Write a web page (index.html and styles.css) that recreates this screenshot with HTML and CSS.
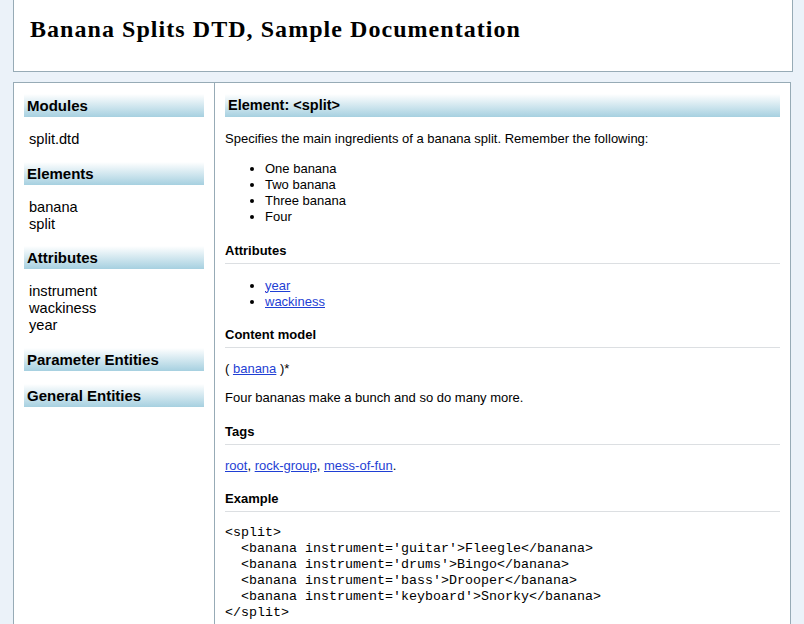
FILE: index.html
```html
<!DOCTYPE html>
<html lang="en">
<head>
<meta charset="utf-8">
<title>Banana Splits DTD, Sample Documentation</title>
<link rel="stylesheet" href="styles.css">
</head>
<body>
<div class="header">
  <h1 class="title">Banana Splits DTD, Sample Documentation</h1>
</div>
<div class="main">
  <div class="sidebar">
    <h2 class="side-h">Modules</h2>
    <ul class="side-list">
      <li>split.dtd</li>
    </ul>
    <h2 class="side-h">Elements</h2>
    <ul class="side-list">
      <li>banana</li>
      <li>split</li>
    </ul>
    <h2 class="side-h">Attributes</h2>
    <ul class="side-list">
      <li>instrument</li>
      <li>wackiness</li>
      <li>year</li>
    </ul>
    <h2 class="side-h side-h-empty">Parameter Entities</h2>
    <h2 class="side-h side-h-empty">General Entities</h2>
  </div>
  <div class="content">
    <h2 class="content-h">Element: &lt;split&gt;</h2>
    <p class="para">Specifies the main ingredients of a banana split. Remember the following:</p>
    <ul class="bullets">
      <li>One banana</li>
      <li>Two banana</li>
      <li>Three banana</li>
      <li>Four</li>
    </ul>
    <h3 class="sub-h">Attributes</h3>
    <ul class="bullets">
      <li><a class="link" href="#year">year</a></li>
      <li><a class="link" href="#wackiness">wackiness</a></li>
    </ul>
    <h3 class="sub-h">Content model</h3>
    <p class="para">( <a class="link" href="#banana">banana</a> )*</p>
    <p class="para">Four bananas make a bunch and so do many more.</p>
    <h3 class="sub-h">Tags</h3>
    <p class="para"><a class="link" href="#root">root</a>, <a class="link" href="#rock-group">rock-group</a>, <a class="link" href="#mess-of-fun">mess-of-fun</a>.</p>
    <h3 class="sub-h">Example</h3>
<pre class="code">&lt;split&gt;
  &lt;banana instrument='guitar'&gt;Fleegle&lt;/banana&gt;
  &lt;banana instrument='drums'&gt;Bingo&lt;/banana&gt;
  &lt;banana instrument='bass'&gt;Drooper&lt;/banana&gt;
  &lt;banana instrument='keyboard'&gt;Snorky&lt;/banana&gt;
&lt;/split&gt;</pre>
  </div>
</div>
</body>
</html>
```
FILE: styles.css
```css
html {
  overflow: hidden;
}
body {
  margin: 0;
  background: #ebf2f9;
  font-family: "Liberation Sans", Arial, sans-serif;
  color: #000;
}
.header {
  box-sizing: border-box;
  width: 780px;
  height: 72px;
  margin-left: 13px;
  padding: 15px 16px 0;
  background: #fff;
  border: 1px solid #97abb6;
  border-top: 0;
}
.title {
  margin: 0;
  font-family: "Liberation Serif", "Times New Roman", serif;
  font-weight: bold;
  font-size: 24px;
  line-height: 28px;
  letter-spacing: 1.05px;
}
.main {
  box-sizing: border-box;
  width: 778px;
  margin: 10px 0 0 13px;
  background: #fff;
  border: 1px solid #97abb6;
  display: flex;
  align-items: stretch;
}
.sidebar {
  flex: 0 0 180px;
  padding: 11px 10px 20px;
}
.side-h {
  margin: 0 0 14px;
  height: 23px;
  padding-left: 3px;
  font-size: 15px;
  line-height: 23px;
  font-weight: bold;
  background: linear-gradient(to bottom, #ffffff 0%, #a6d0e0 100%);
}
.side-h-empty {
  margin-bottom: 13px;
}
.side-list {
  list-style: none;
  margin: 0 0 13.5px;
  padding: 0 0 0 5px;
  font-size: 14.6px;
  line-height: 17px;
}
.content {
  flex: 1 1 auto;
  border-left: 1px solid #97abb6;
  padding: 11px 10px 20px;
  font-size: 13px;
  line-height: 16px;
}
.content-h {
  margin: 0;
  height: 23px;
  padding-left: 3px;
  font-size: 14.5px;
  line-height: 23px;
  font-weight: bold;
  background: linear-gradient(to bottom, #ffffff 0%, #a6d0e0 100%);
}
.para {
  margin: 13px 0;
}
.content-h + .para {
  margin-top: 14px;
}
.bullets {
  margin: 14px 0;
  padding-left: 40px;
  list-style: disc;
}
.sub-h {
  margin: 17.5px 0 0;
  padding-bottom: 4px;
  border-bottom: 1px solid #dcdfe2;
  font-size: 13px;
  line-height: 16px;
  font-weight: bold;
}
.link {
  color: #1f3fd4;
  text-decoration: underline;
}
.code {
  margin: 13px 0;
  font-family: "Liberation Mono", "Courier New", monospace;
  font-size: 13.33px;
  line-height: 16px;
}
```
